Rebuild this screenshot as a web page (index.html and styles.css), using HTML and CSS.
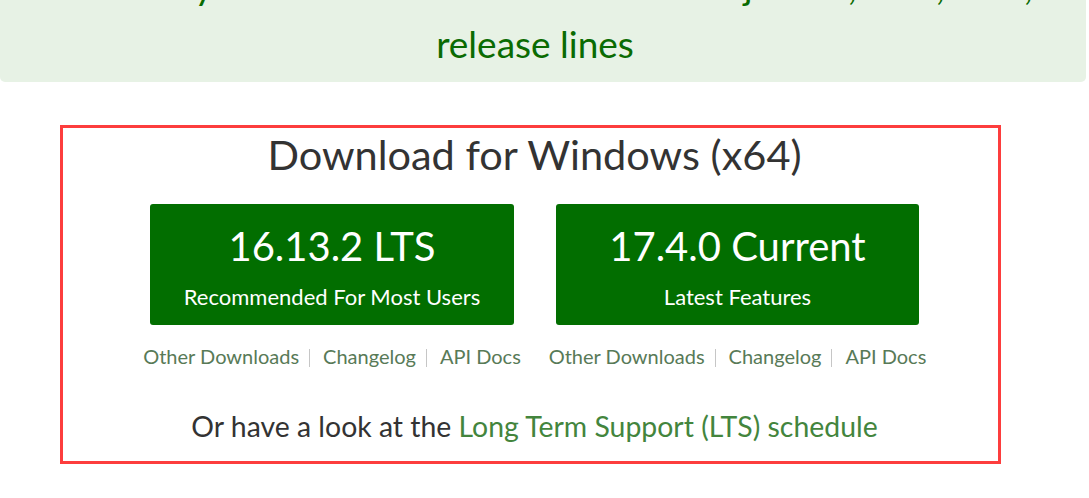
FILE: index.html
```html
<!DOCTYPE html>
<html lang="en">
<head>
<meta charset="utf-8">
<title>Download Node.js</title>
<link rel="stylesheet" href="styles.css">
</head>
<body>
  <div class="banner">
    <a class="banner-link" href="#">
      <span class="banner-line">New security releases now available for Node.js 17.x, 16.x, 14.x, and 12.x</span>
      <span class="banner-line">release lines</span>
    </a>
  </div>

  <section class="download-block">
    <h2 class="download-title">Download for Windows (x64)</h2>
    <div class="download-columns">
      <div class="download-col">
        <a class="download-button" href="#">
          <span class="version">16.13.2 LTS</span>
          <span class="tagline">Recommended For Most Users</span>
        </a>
        <ul class="download-links">
          <li><a href="#">Other Downloads</a></li>
          <li class="pipe"></li>
          <li><a href="#">Changelog</a></li>
          <li class="pipe"></li>
          <li><a href="#">API Docs</a></li>
        </ul>
      </div>
      <div class="download-col">
        <a class="download-button" href="#">
          <span class="version">17.4.0 Current</span>
          <span class="tagline">Latest Features</span>
        </a>
        <ul class="download-links">
          <li><a href="#">Other Downloads</a></li>
          <li class="pipe"></li>
          <li><a href="#">Changelog</a></li>
          <li class="pipe"></li>
          <li><a href="#">API Docs</a></li>
        </ul>
      </div>
    </div>
    <p class="schedule">Or have a look at the <a href="#">Long Term Support (LTS) schedule</a></p>
  </section>
</body>
</html>
```
FILE: styles.css
```css
* { box-sizing: border-box; }

html, body {
  margin: 0;
  padding: 0;
  background: #fff;
  overflow: hidden;
}

body {
  font-family: "Lato", "Open Sans", sans-serif;
  color: #333;
}

a { text-decoration: none; }

/* Banner */
.banner {
  margin: -43px 3px 0 0;
  padding: 0 16px 9px 0;
  background: #e7f2e5;
  border-radius: 0 0 5px 5px;
  text-align: center;
}

.banner-link {
  color: #0a6b02;
  font-size: 37px;
  line-height: 58px;
}

.banner-line {
  display: block;
  white-space: nowrap;
}

/* Download block (annotated with red outline) */
.download-block {
  width: 941px;
  margin: 43px 0 0 60px;
  border: 3px solid #fd3d3d;
  padding: 2px 0 18px 8px;
  display: flex;
  flex-direction: column;
  align-items: center;
}

.download-title {
  margin: 0;
  font-size: 41.5px;
  font-weight: 400;
  line-height: 49px;
  color: #333;
}

.download-columns {
  display: flex;
  gap: 42px;
  margin-top: 25px;
}

.download-col {
  width: 364px;
  display: flex;
  flex-direction: column;
  align-items: center;
}

.download-col + .download-col { width: 363px; }

.download-button {
  align-self: stretch;
  height: 121px;
  padding-top: 18px;
  background: #026e00;
  border-radius: 3px;
  color: #fff;
  display: flex;
  flex-direction: column;
  align-items: center;
}

.version {
  font-size: 40px;
  line-height: 48px;
}

.tagline {
  margin-top: 14px;
  font-size: 22px;
  line-height: 26px;
}

.download-links {
  list-style: none;
  margin: 19px 0 0;
  padding: 0;
  display: flex;
  align-items: center;
  white-space: nowrap;
  font-size: 20px;
  line-height: 24px;
}

.download-links a { color: #587a57; }

.pipe {
  flex: none;
  width: 1px;
  height: 18px;
  margin: 3px 13px 0 10px;
  background: #c6c6c6;
}

.schedule {
  margin: 41px 0 0;
  font-size: 28.4px;
  line-height: 34px;
  color: #333;
}

.schedule a { color: #43853d; }
```
